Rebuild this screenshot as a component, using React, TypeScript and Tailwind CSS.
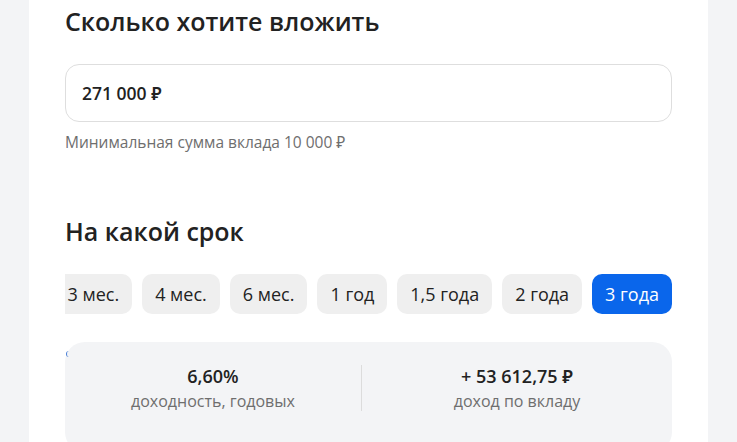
import React from "react";

const terms = ["3 мес.", "4 мес.", "6 мес.", "1 год", "1,5 года", "2 года", "3 года"];

export default function App() {
  return (
    <div
      className="h-[442px] w-[737px] overflow-hidden bg-[#f3f4f6]"
      style={{ fontFamily: '"Open Sans", "Noto Sans", sans-serif' }}
    >
      <div className="ml-[29px] w-[679px] h-full bg-white px-[36px] pt-[5px] text-[#222222]">
        <h2 className="text-[25px] leading-[32px] font-semibold">Сколько хотите вложить</h2>
        <div className="mt-[27px] h-[58px] rounded-[14px] border border-[#dedede] flex items-center px-[16px]">
          <span className="text-[17.5px] font-semibold">271 000 ₽</span>
        </div>
        <p className="mt-[10px] text-[15.5px] leading-[20px] text-[#6e6e6e]">
          Минимальная сумма вклада 10 000 ₽
        </p>
        <h2 className="mt-[63px] text-[25px] leading-[32px] font-semibold">На какой срок</h2>
        <div className="mt-[27px] overflow-hidden flex justify-end">
          <div className="flex gap-[10px] shrink-0">
            {terms.map((t, i) => {
              const active = i === terms.length - 1;
              return (
                <div
                  key={t}
                  className={
                    "h-[40px] shrink-0 rounded-[10px] px-[13px] flex items-center text-[18px] whitespace-nowrap " +
                    (active ? "bg-[#0a66eb] text-white" : "bg-[#efefef] text-[#222222]")
                  }
                >
                  {t}
                </div>
              );
            })}
          </div>
        </div>
        <div className="relative mt-[28px] rounded-[20px] bg-[#f3f4f6] h-[110px] flex pt-[22px]">
          <div className="absolute left-[1px] top-[9px] w-[3px] h-[6px] rounded-l-full border-l border-[#4a7fd6]" />
          <div className="w-[296px] flex flex-col items-center">
            <div className="text-[18px] leading-[24px] font-semibold">6,60%</div>
            <div className="text-[16px] leading-[20px] mt-[3px] text-[#6e6e6e]">доходность, годовых</div>
          </div>
          <div className="w-px bg-[#dcdcdc] h-[46px] mt-[1px]" />
          <div className="flex-1 flex flex-col items-center">
            <div className="text-[18px] leading-[24px] font-semibold">+ 53 612,75 ₽</div>
            <div className="text-[16px] leading-[20px] mt-[3px] text-[#6e6e6e]">доход по вкладу</div>
          </div>
        </div>
      </div>
    </div>
  );
}
